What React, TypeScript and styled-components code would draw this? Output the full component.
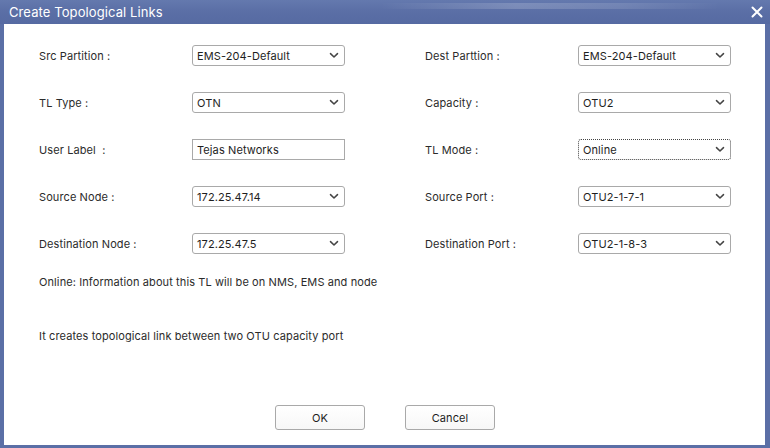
import React from 'react';
import styled, { createGlobalStyle } from 'styled-components';

const GlobalStyle = createGlobalStyle`
  html, body {
    margin: 0;
    padding: 0;
    background: #ffffff;
  }
  body {
    font-family: Inter, "Noto Sans", sans-serif;
  }
`;

const Window = styled.div`
  width: 770px;
  height: 448px;
  box-sizing: border-box;
  display: flex;
  flex-direction: column;
  background: #5b6fa6;
  padding: 0 5px 3px 4px;
`;

const TitleBar = styled.div`
  height: 24px;
  margin: 0 -5px 0 -4px;
  padding: 0 9px;
  display: flex;
  align-items: center;
  justify-content: space-between;
  background: linear-gradient(
    180deg,
    #6479ae 0%,
    #5b6fa6 45%,
    #566aa2 100%
  );
  position: relative;
  overflow: hidden;
`;

const Sheen = styled.div`
  position: absolute;
  top: 3px;
  left: 380px;
  width: 340px;
  height: 6px;
  background: linear-gradient(
    90deg,
    rgba(255, 255, 255, 0) 0%,
    rgba(255, 255, 255, 0.18) 40%,
    rgba(255, 255, 255, 0.12) 70%,
    rgba(255, 255, 255, 0) 100%
  );
`;

const Title = styled.span`
  color: #ffffff;
  font-size: 13px;
  letter-spacing: 0.1px;
  position: relative;
`;

const CloseButton = styled.span`
  display: flex;
  align-items: center;
  margin-right: -2px;
  position: relative;
`;

const Body = styled.div`
  flex: 1;
  background: #ffffff;
  display: flex;
  flex-direction: column;
  padding: 21px 0 0 35px;
  font-size: 11px;
  letter-spacing: 0.1px;
`;

const FormGrid = styled.div`
  display: grid;
  grid-template-columns: 153px 153px 80px 153px 153px;
  grid-auto-rows: 21px;
  row-gap: 26px;
  align-items: center;
`;

const Label = styled.div`
  color: #2b2b2b;
  white-space: pre;
`;

const Spacer = styled.div``;

const SelectBox = styled.div<{ $focused?: boolean }>`
  height: 21px;
  box-sizing: border-box;
  border: 1px ${(p) => (p.$focused ? 'dotted #444' : 'solid #a9a9a9')};
  border-radius: 3px;
  display: flex;
  align-items: center;
  justify-content: space-between;
  padding: 0 5px 0 4px;
  color: #1e1e1e;
  background: #ffffff;
`;

const TextBox = styled.div`
  height: 21px;
  box-sizing: border-box;
  border: 1px solid #a9a9a9;
  display: flex;
  align-items: center;
  padding: 0 4px;
  color: #1e1e1e;
`;

const Note = styled.div<{ $top: number }>`
  color: #2b2b2b;
  margin-top: ${(p) => p.$top}px;
`;

const ButtonRow = styled.div`
  margin-top: auto;
  margin-bottom: 15px;
  display: flex;
  gap: 40px;
  padding-left: 236px;
`;

const Button = styled.div`
  width: 90px;
  height: 25px;
  box-sizing: border-box;
  border: 1px solid #a9a9a9;
  border-radius: 3px;
  display: flex;
  align-items: center;
  justify-content: center;
  color: #1e1e1e;
  background: linear-gradient(180deg, #ffffff 0%, #f7f7f7 100%);
`;

const Chevron = () => (
  <svg width="10" height="7" viewBox="0 0 10 7">
    <path
      d="M1.5 1.6 L5 5 L8.5 1.6"
      fill="none"
      stroke="#444"
      strokeWidth="1.5"
      strokeLinecap="round"
      strokeLinejoin="round"
    />
  </svg>
);

const Select = ({ value, focused }: { value: string; focused?: boolean }) => (
  <SelectBox $focused={focused}>
    <span>{value}</span>
    <Chevron />
  </SelectBox>
);

type Row = {
  left: string;
  leftField: React.ReactNode;
  right: string;
  rightField: React.ReactNode;
};

const rows: Row[] = [
  {
    left: 'Src Partition :',
    leftField: <Select value="EMS-204-Default" />,
    right: 'Dest Parttion :',
    rightField: <Select value="EMS-204-Default" />,
  },
  {
    left: 'TL Type :',
    leftField: <Select value="OTN" />,
    right: 'Capacity :',
    rightField: <Select value="OTU2" />,
  },
  {
    left: 'User Label  :',
    leftField: <TextBox>Tejas Networks</TextBox>,
    right: 'TL Mode :',
    rightField: <Select value="Online" focused />,
  },
  {
    left: 'Source Node :',
    leftField: <Select value="172.25.47.14" />,
    right: 'Source Port :',
    rightField: <Select value="OTU2-1-7-1" />,
  },
  {
    left: 'Destination Node :',
    leftField: <Select value="172.25.47.5" />,
    right: 'Destination Port :',
    rightField: <Select value="OTU2-1-8-3" />,
  },
];

const App = () => {
  return (
    <>
      <GlobalStyle />
      <Window>
        <TitleBar>
          <Sheen />
          <Title>Create Topological Links</Title>
          <CloseButton>
            <svg width="12" height="12" viewBox="0 0 12 12">
              <path
                d="M1.5 1.5 L10.5 10.5 M10.5 1.5 L1.5 10.5"
                stroke="#ffffff"
                strokeWidth="2"
                strokeLinecap="round"
              />
            </svg>
          </CloseButton>
        </TitleBar>
        <Body>
          <FormGrid>
            {rows.map((r) => (
              <React.Fragment key={r.left}>
                <Label>{r.left}</Label>
                {r.leftField}
                <Spacer />
                <Label>{r.right}</Label>
                {r.rightField}
              </React.Fragment>
            ))}
          </FormGrid>
          <Note $top={21}>Online: Information about this TL will be on NMS, EMS and node</Note>
          <Note $top={40}>It creates topological link between two OTU capacity port</Note>
          <ButtonRow>
            <Button>OK</Button>
            <Button>Cancel</Button>
          </ButtonRow>
        </Body>
      </Window>
    </>
  );
};

export default App;
